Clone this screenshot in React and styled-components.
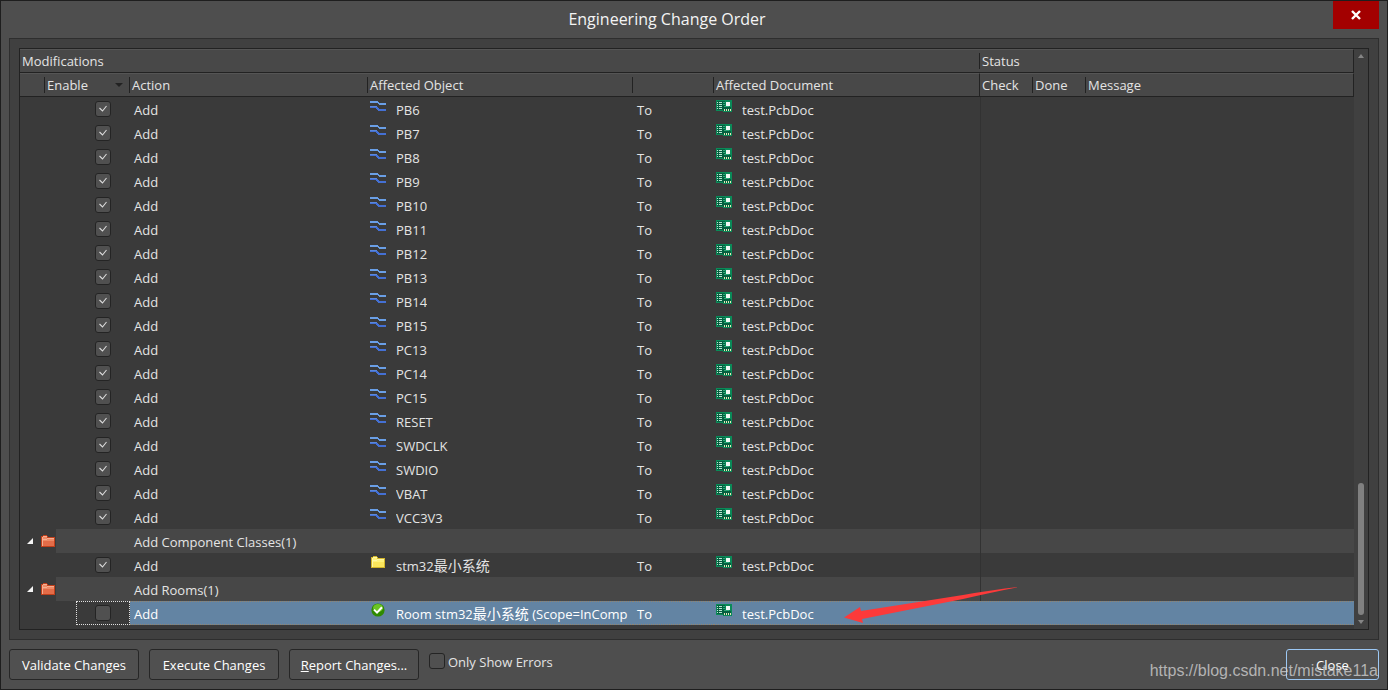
import React from 'react'
import styled, { createGlobalStyle, css } from 'styled-components'

const nets = [
    'PB6', 'PB7', 'PB8', 'PB9', 'PB10', 'PB11', 'PB12', 'PB13', 'PB14', 'PB15',
    'PC13', 'PC14', 'PC15', 'RESET', 'SWDCLK', 'SWDIO', 'VBAT', 'VCC3V3',
]

const rows = [
    ...nets.map((name) => ({ name, icon: 'net', enabled: true })),
    { group: 'Add Component Classes(1)' },
    { name: 'stm32', cjk: '最小系统', icon: 'folder', enabled: true },
    { group: 'Add Rooms(1)' },
    { name: 'Room stm32', cjk: '最小系统', rest: ' (Scope=InComp', icon: 'ok', enabled: false, selected: true },
]

function NetIcon() {
    return (
        <Icon width="16" height="10" viewBox="0 0 16 10" shapeRendering="crispEdges">
            <path d="M0 0h8v1h1v1h7v2H9V3H8V2H0z" fill="#6a9fe6" />
            <path d="M0 5h7v1h1v1h1v1h7v2H8V9H7V8H6V7H0z" fill="#4470d4" />
            <path d="M0 5h7v1H0z" fill="#5a88dc" />
        </Icon>
    )
}

function FolderIcon({ light, dark, edge, shine }) {
    return (
        <Icon width="14" height="12" viewBox="0 0 14 12" shapeRendering="crispEdges">
            <path d="M0 1h2V0h4v1h1v1h7v10H0z" fill={edge} />
            <path d="M1 2h1V1h4v2h7v8H1z" fill={dark} />
            <path d="M1 2h1V1h4v2h7v3H1z" fill={light} />
            <path d="M1 2h1v9H1zM2 1h4v1H2zM2 4h4V3h7v1H6v1H2z" fill={shine} />
        </Icon>
    )
}

function OkIcon() {
    return (
        <Icon width="14" height="14" viewBox="0 0 14 14">
            <circle cx="7" cy="7" r="6.6" fill="#2f8a00" />
            <ellipse cx="7" cy="5" rx="5" ry="4" fill="#6cc424" />
            <path d="M3 6.6l3 3 5-5.4" fill="none" stroke="#fff" strokeWidth="2" />
        </Icon>
    )
}

function PcbIcon() {
    return (
        <Icon width="16" height="12" viewBox="0 0 16 12" shapeRendering="crispEdges">
            <path d="M0 0h16v12H7v-1H0z" fill="#0a8a58" />
            <path d="M1 1h8v9H1zM7 7h8v4H7z" fill="#056040" />
            <path d="M1 2h1v1H1zM1 4h1v1H1zM1 6h1v1H1zM1 8h1v1H1zM3 2h3v1H3zM3 4h3v1H3zM3 6h3v1H3zM3 8h3v1H3z" fill="#b8e4d0" />
            <path d="M7 2h2v1H7zM7 4h2v1H7zM8 6h5v1H8z" fill="#2aa877" />
            <path d="M10 2h4v4h-4z" fill="#f2f8f4" />
            <path d="M8 9h1v2H8zM10 9h1v2h-1zM12 9h1v2h-1zM14 9h1v2h-1z" fill="#e6e8b8" />
        </Icon>
    )
}

function Check({ label, ...props }) {
    return (
        <CheckBox>
            <input type="checkbox" aria-label={label} {...props} />
            <svg width="16" height="16" viewBox="0 0 16 16" aria-hidden="true">
                <path d="M4.500 7L7.500 10l4-5" fill="none" stroke="#dcdcdc" strokeWidth="1.100" />
            </svg>
        </CheckBox>
    )
}

function ObjectIcon({ type }) {
    if (type === 'folder') return <FolderIcon light="#fff27a" dark="#fbe65c" edge="#d2b52a" shine="#fff7a6" />
    if (type === 'ok') return <OkIcon />
    return <NetIcon />
}

function GroupRow({ title }) {
    return (
        <Row $group>
            <td colSpan="2">
                <TreeCell>
                    <Expander type="button" aria-label={'Collapse ' + title}>
                        <svg width="6" height="6" viewBox="0 0 6 6">
                            <path d="M6 0v6H0z" fill="#f4f4f4" />
                        </svg>
                    </Expander>
                    <FolderIcon light="#ee8a66" dark="#e46c48" edge="#c0401c" shine="#f6ae90" />
                </TreeCell>
            </td>
            <td colSpan="4"><Text>{title}</Text></td>
            <td colSpan="3"></td>
        </Row>
    )
}

function ChangeRow({ row }) {
    return (
        <Row $selected={row.selected}>
            <td colSpan="2">
                <EnableCell $focused={row.selected}>
                    <Check label={'Enable ' + row.name} defaultChecked={row.enabled} />
                </EnableCell>
            </td>
            <td><Text>Add</Text></td>
            <td>
                <IconText>
                    <IconSlot><ObjectIcon type={row.icon} /></IconSlot>
                    <Name>{row.name}{row.cjk && <Cjk>{row.cjk}</Cjk>}{row.rest}</Name>
                </IconText>
            </td>
            <td><Text>To</Text></td>
            <td>
                <IconText>
                    <IconSlot><PcbIcon /></IconSlot>
                    <Name>test.PcbDoc</Name>
                </IconText>
                {row.selected && (
                    <Pointer width="178" height="38" viewBox="0 0 178 38" aria-hidden="true">
                        <path d="M1 31.500L17 21l1 4L120 9Q150 4 176 1Q150 6 120 13L19 33l1 4z" fill="#fc3a3a" />
                    </Pointer>
                )}
            </td>
            <td colSpan="3"></td>
        </Row>
    )
}

function App() {
    return (
        <Window>
            <GlobalStyle />
            <TitleBar>
                <h1>Engineering Change Order</h1>
                <CloseButton type="button" aria-label="Close window">
                    <svg width="10" height="10" viewBox="0 0 10 10">
                        <path d="M1 1l8 8M9 1L1 9" stroke="#fff" strokeWidth="2.400" />
                    </svg>
                </CloseButton>
            </TitleBar>
            <Frame>
                <Panel>
                    <Table>
                        <colgroup>
                            <Col $w={25} />
                            <Col $w={85} />
                            <Col $w={238} />
                            <Col $w={265} />
                            <Col $w={81} />
                            <Col $w={266} />
                            <Col $w={53} />
                            <Col $w={53} />
                            <col />
                        </colgroup>
                        <thead>
                            <tr>
                                <Th colSpan="6"><HeadCell $line>Modifications</HeadCell></Th>
                                <Th colSpan="3" $edge><HeadCell>Status</HeadCell></Th>
                            </tr>
                            <tr>
                                <Th><HeadCell $line /></Th>
                                <Th>
                                    <HeadCell $line>
                                        Enable
                                        <SortMark width="8" height="4" viewBox="0 0 8 4">
                                            <path d="M0 0h8L4 4z" fill="#222" />
                                        </SortMark>
                                    </HeadCell>
                                </Th>
                                <Th><HeadCell $line>Action</HeadCell></Th>
                                <Th><HeadCell $line>Affected Object</HeadCell></Th>
                                <Th><HeadCell $line /></Th>
                                <Th $edge><HeadCell>Affected Document</HeadCell></Th>
                                <Th><HeadCell $line>Check</HeadCell></Th>
                                <Th><HeadCell $line>Done</HeadCell></Th>
                                <Th $edge><HeadCell>Message</HeadCell></Th>
                            </tr>
                        </thead>
                        <tbody>
                            {rows.map((row) =>
                                row.group
                                    ? <GroupRow key={row.group} title={row.group} />
                                    : <ChangeRow key={row.name} row={row} />
                            )}
                        </tbody>
                    </Table>
                    <ScrollBar>
                        <svg width="6" height="4" viewBox="0 0 6 4"><path d="M3 0l3 4H0z" fill="#858585" /></svg>
                        <Thumb />
                        <svg width="6" height="4" viewBox="0 0 6 4"><path d="M0 0h6L3 4z" fill="#858585" /></svg>
                    </ScrollBar>
                </Panel>
            </Frame>
            <Footer>
                <Button type="button">Validate Changes</Button>
                <Button type="button">Execute Changes</Button>
                <Button type="button"><u>R</u>eport Changes...</Button>
                <ErrorsOnly>
                    <Check id="errors-only" />
                    <label htmlFor="errors-only">Only Show Errors</label>
                </ErrorsOnly>
                <Button type="button" $primary>Close</Button>
            </Footer>
            <Watermark>https://blog.csdn.net/mistake11a</Watermark>
        </Window>
    )
}

export default App

const GlobalStyle = createGlobalStyle`
* {
    box-sizing: border-box;
}
body {
    margin: 0;
    background: #4e4e4e;
    color: #e4e4e4;
    font-family: "Open Sans", "Noto Sans", "Noto Sans CJK SC", sans-serif;
    font-size: 13px;
}
button, input {
    font: inherit;
    color: inherit;
}
`

const Window = styled.div`
position: relative;
display: flex;
flex-direction: column;
min-height: 100vh;
border: 1px solid #1e1e1e;
background: #4e4e4e;
`

const TitleBar = styled.header`
display: flex;
align-items: flex-start;
height: 37px;
padding-right: 8px;
h1 {
    flex: 1;
    margin: 0;
    font-size: 16px;
    font-weight: 400;
    line-height: 36px;
    text-align: center;
    color: #f4f4f4;
}
`

const CloseButton = styled.button`
display: flex;
align-items: center;
justify-content: center;
width: 46px;
height: 28px;
border: none;
padding: 0;
background: #a30000;
cursor: pointer;
`

const Frame = styled.main`
flex: 1;
display: flex;
margin: 0 8px;
border: 1px solid #2e2e2e;
padding: 9px;
background: #404040;
`

const Panel = styled.div`
flex: 1;
display: flex;
align-items: stretch;
border: 1px solid #222;
padding-bottom: 4px;
background: #3a3a3a;
`

const Table = styled.table`
flex: 1;
align-self: flex-start;
width: 100%;
table-layout: fixed;
border-collapse: separate;
border-spacing: 0;
td {
    height: 24px;
    padding: 0;
}
`

const Col = styled.col`
width: ${(p) => p.$w}px;
`

const Th = styled.th`
height: 24px;
padding: 0;
border-top: 1px solid #555;
border-bottom: 1px solid #222;
border-right: ${(p) => (p.$edge ? '1px solid #222' : 'none')};
background: #484848;
font-weight: 400;
text-align: left;
`

const HeadCell = styled.div`
display: flex;
align-items: center;
justify-content: space-between;
height: 16px;
padding-left: 2px;
border-right: ${(p) => (p.$line ? '1px solid #222' : 'none')};
line-height: 16px;
white-space: nowrap;
`

const SortMark = styled.svg`
margin-right: 6px;
`

const Row = styled.tr`
td + td {
    background: ${(p) => (p.$group ? '#474747' : 'transparent')};
}
td:last-child {
    border-left: ${(p) => (p.$selected ? 'none' : '1px solid #323232')};
}
${(p) => p.$selected && css`
td + td {
    position: relative;
    background:
        repeating-linear-gradient(to right, #94846c 0 1px, #6384a3 1px 2px) top / 100% 1px no-repeat,
        repeating-linear-gradient(to right, #94846c 0 1px, #6384a3 1px 2px) bottom / 100% 1px no-repeat,
        #6384a3;
    color: #fff;
}
`}
`

const TreeCell = styled.div`
display: flex;
align-items: center;
height: 24px;
padding-left: 7px;
background: linear-gradient(to right, #3a3a3a 36px, #474747 36px);
`

const Expander = styled.button`
display: flex;
width: 6px;
margin-right: 8px;
border: none;
padding: 0;
background: none;
`

const EnableCell = styled.div`
display: flex;
align-items: center;
height: 24px;
margin-left: 56px;
padding-left: 18px;
border: 1px dotted ${(p) => (p.$focused ? '#e0e0e0' : 'transparent')};
`

const CheckBox = styled.span`
display: grid;
width: 16px;
height: 16px;
input, svg {
    grid-area: 1 / 1;
}
input {
    appearance: none;
    width: 16px;
    height: 16px;
    margin: 0;
    border: 1px solid #242424;
    border-radius: 3px;
    background: #505050;
}
svg {
    visibility: hidden;
    pointer-events: none;
}
input:checked + svg {
    visibility: visible;
}
`

const Text = styled.div`
height: 24px;
padding: 2px 0 0 4px;
line-height: 22px;
white-space: nowrap;
`

const IconText = styled.div`
display: flex;
height: 24px;
padding: 2px 0 0 2px;
line-height: 22px;
white-space: nowrap;
`

const IconSlot = styled.span`
display: flex;
flex: none;
align-items: center;
justify-content: center;
width: 16px;
height: 14px;
margin-right: 10px;
`

const Name = styled.span`
overflow: hidden;
`

const Cjk = styled.span`
font-size: 14px;
line-height: 20px;
`

const Icon = styled.svg`
display: block;
flex: none;
`

const Pointer = styled.svg`
position: absolute;
left: 129px;
top: -15px;
z-index: 1;
pointer-events: none;
`

const ScrollBar = styled.div`
display: flex;
flex: none;
flex-direction: column;
align-items: center;
gap: 5px;
width: 14px;
margin-bottom: -4px;
padding: 5px 0;
background: #404040;
`

const Thumb = styled.div`
width: 6px;
height: 132px;
margin-top: auto;
border-radius: 3px;
background: #808080;
`

const Footer = styled.footer`
display: flex;
gap: 10px;
padding: 9px 8px;
`

const Button = styled.button`
width: ${(p) => (p.$primary ? '93px' : '130px')};
height: 31px;
border: 1px solid ${(p) => (p.$primary ? '#9cc8f4' : '#262626')};
border-radius: 3px;
padding: 0;
background: #505050;
color: #fff;
white-space: nowrap;
cursor: pointer;
`

const ErrorsOnly = styled.div`
display: flex;
flex: 1;
gap: 3px;
align-items: center;
height: 24px;
label {
    padding-top: 2px;
}
`

const Watermark = styled.div`
position: absolute;
right: 9px;
bottom: 8px;
color: rgba(214, 214, 214, 0.75);
font-family: "Liberation Sans", sans-serif;
font-size: 16px;
line-height: 20px;
pointer-events: none;
`
